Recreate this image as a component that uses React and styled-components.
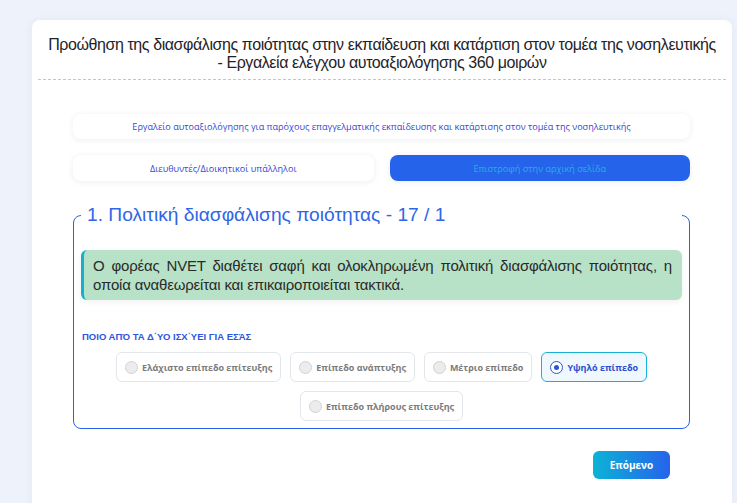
import React, { useState } from "react";
import styled, { createGlobalStyle } from "styled-components";

const Global = createGlobalStyle`
  html, body { margin: 0; padding: 0; }
  body {
    background: #eef2fa;
    font-family: "Liberation Sans", Arial, sans-serif;
    overflow: hidden;
  }
`;

const Page = styled.div`
  padding: 20px 0 0 32px;
`;

const Card = styled.div`
  width: 700px;
  min-height: 520px;
  background: #fff;
  border-radius: 8px;
  box-shadow: 0 0 10px rgba(40, 60, 120, 0.06);
`;

const Header = styled.div`
  margin: 0 6px;
  padding: 16px 0 7px;
  border-bottom: 1px dashed #c4c4c4;
  text-align: center;
`;

const Title = styled.h1`
  margin: 0;
  font-size: 16px;
  line-height: 18px;
  letter-spacing: -0.42px;
  font-weight: 400;
  color: #1f2328;
`;

const Body = styled.div`
  padding: 34px 42px 0 41px;
`;

const Pill = styled.div`
  height: 25px;
  display: flex;
  align-items: center;
  justify-content: center;
  border-radius: 8px;
  background: ${(p) => (p.$primary ? "#2563eb" : "#fff")};
  box-shadow: 0 1px 6px rgba(30, 40, 90, 0.08);
  color: ${(p) => (p.$primary ? "#21b3dc" : "#3146d4")};
  font-family: "Open Sans", "Liberation Sans", sans-serif;
  font-size: 9.1px;
  cursor: ${(p) => (p.$primary ? "pointer" : "default")};
`;

const PillRow = styled.div`
  margin-top: 16px;
  display: grid;
  grid-template-columns: 1fr 1fr;
  gap: 16px;
  ${Pill} { height: 26px; }
`;

const Section = styled.fieldset`
  margin: 23px 0 0;
  padding: 0 7px 7px;
  border: 1px solid #2563eb;
  border-radius: 8px;
`;

const Legend = styled.legend`
  width: 100%;
  box-sizing: border-box;
  padding: 0 0 0 6px;
  font-size: 19.2px;
  line-height: 22px;
  color: #2f66e6;
`;

const Statement = styled.div`
  margin-top: 24px;
  padding: 6px 10px 6px 9px;
  background: #b7e2c7;
  border-left: 3px solid #14b1cf;
  border-radius: 6px;
  box-shadow: 0 2px 6px rgba(0, 0, 0, 0.06);
  font-size: 15px;
  line-height: 19px;
  letter-spacing: -0.18px;
  color: #2a2a2a;
  text-align: justify;
`;

const Question = styled.div`
  margin: 31px 0 0 1px;
  font-size: 9.5px;
  line-height: 11px;
  font-weight: 700;
  color: #2d55e0;
`;

const Options = styled.div`
  margin-top: 10px;
  display: flex;
  flex-wrap: wrap;
  justify-content: center;
  gap: 9px;
`;

const Option = styled.label`
  height: 30px;
  box-sizing: border-box;
  display: flex;
  align-items: center;
  gap: 4px;
  padding: 0 8px;
  border-radius: 6px;
  border: 1px solid ${(p) => (p.$active ? "#17b3d6" : "#e3e6ea")};
  background: ${(p) => (p.$active ? "#eff8ff" : "#fff")};
  color: ${(p) => (p.$active ? "#2b4ccf" : "#7b7b7b")};
  font-family: "Open Sans", "Liberation Sans", sans-serif;
  font-size: 9px;
  font-weight: 700;
  cursor: pointer;
`;

const Radio = styled.span`
  width: 13px;
  height: 13px;
  box-sizing: border-box;
  border-radius: 50%;
  flex: none;
  display: flex;
  align-items: center;
  justify-content: center;
  border: ${(p) => (p.$active ? "1.5px solid #2a55d8" : "1px solid #d2d2d2")};
  background: ${(p) => (p.$active ? "#fff" : "#ececec")};
  &::after {
    content: "";
    width: 5px;
    height: 5px;
    border-radius: 50%;
    background: #2a55d8;
    display: ${(p) => (p.$active ? "block" : "none")};
  }
`;

const Footer = styled.div`
  display: flex;
  justify-content: flex-end;
  padding: 22px 20px 0 0;
`;

const NextButton = styled.button`
  width: 77px;
  height: 28px;
  border: none;
  border-radius: 6px;
  background: linear-gradient(90deg, #0cb3d6, #2563eb);
  color: #fff;
  font-family: "Open Sans", "Liberation Sans", sans-serif;
  font-size: 10px;
  font-weight: 700;
  cursor: pointer;
`;

const levels = [
  "Ελάχιστο επίπεδο επίτευξης",
  "Επίπεδο ανάπτυξης",
  "Μέτριο επίπεδο",
  "Υψηλό επίπεδο",
  "Επίπεδο πλήρους επίτευξης",
];

export default function App() {
  const [choice, setChoice] = useState(3);
  return (
    <Page>
      <Global />
      <Card>
        <Header>
          <Title>
            Προώθηση της διασφάλισης ποιότητας στην εκπαίδευση και κατάρτιση στον τομέα της νοσηλευτικής
            <br />- Εργαλεία ελέγχου αυτοαξιολόγησης 360 μοιρών
          </Title>
        </Header>
        <Body>
          <Pill>
            Εργαλείο αυτοαξιολόγησης για παρόχους επαγγελματικής εκπαίδευσης και κατάρτισης στον τομέα της νοσηλευτικής
          </Pill>
          <PillRow>
            <Pill>Διευθυντές/Διοικητικοί υπάλληλοι</Pill>
            <Pill $primary>Επιστροφή στην αρχική σελίδα</Pill>
          </PillRow>
          <Section>
            <Legend>1. Πολιτική διασφάλισης ποιότητας - 17 / 1</Legend>
            <Statement>
              Ο φορέας NVET διαθέτει σαφή και ολοκληρωμένη πολιτική διασφάλισης ποιότητας, η
              οποία αναθεωρείται και επικαιροποιείται τακτικά.
            </Statement>
            <Question>ΠΟΙΟ ΑΠΌ ΤΑ Δ΄ΥΟ ΙΣΧ΄ΥΕΙ ΓΙΑ ΕΣΆΣ</Question>
            <Options>
              {levels.map((label, i) => (
                <Option key={label} $active={choice === i} onClick={() => setChoice(i)}>
                  <Radio $active={choice === i} />
                  {label}
                </Option>
              ))}
            </Options>
          </Section>
          <Footer>
            <NextButton>Επόμενο</NextButton>
          </Footer>
        </Body>
      </Card>
    </Page>
  );
}
